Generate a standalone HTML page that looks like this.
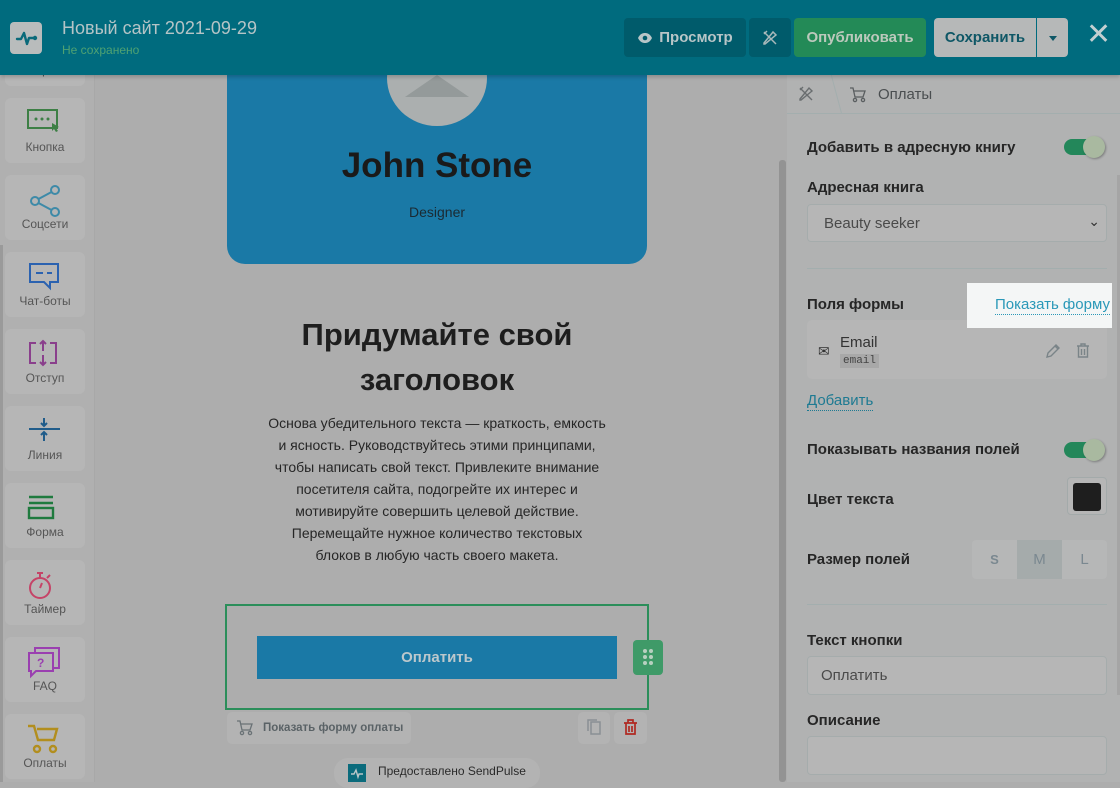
<!DOCTYPE html>
<html><head><meta charset="utf-8">
<style>
*{box-sizing:border-box;margin:0;padding:0}
body{width:1120px;height:782px;overflow:hidden;position:relative;background:#adadad;font-family:"Liberation Sans","DejaVu Sans",sans-serif;color:#222}
.abs{position:absolute}
#hdr{left:0;top:0;width:1120px;height:75px;background:#006b7e;box-shadow:0 2px 4px rgba(0,0,0,.2);z-index:5}
.btn{position:absolute;top:18px;height:39px;border-radius:4px;font-weight:bold;font-size:15px;display:flex;align-items:center;justify-content:center}
#side{left:0;top:75px;width:95px;height:707px;background:#b0b0b0;border-right:1px solid #a8a8a8}
.tile{position:absolute;left:5px;width:80px;height:65px;background:#b6b6b6;border-radius:6px;text-align:center;font-size:12px;color:#555}
.tile svg{position:absolute;left:22px;top:10px}
.tile span{position:absolute;left:0;right:0;top:42px}
#panel{left:787px;top:75px;width:333px;height:707px;background:#b1b2b2}
.lbl{position:absolute;left:20px;font-weight:bold;font-size:15px;color:#262626}
.inp{position:absolute;left:20px;width:300px;background:#b6b6b6;border:1px solid #a5acac;border-radius:4px;font-size:15px;color:#4a4a4a}
.tog{position:absolute;left:277px;width:38px;height:16px;background:#23875a;border-radius:8px}
.tog i{position:absolute;right:-3px;top:-3px;width:22px;height:22px;border-radius:50%;background:#a9b9a0;box-shadow:1px 1px 2px rgba(0,0,0,.3)}
.hr{position:absolute;left:20px;width:300px;height:1px;background:#a3aeae}
</style></head><body>

<div id="hdr" class="abs">
  <div class="abs" style="left:10px;top:22px;width:32px;height:32px;background:#b9bcbc;border-radius:4px">
    <svg width="32" height="32" viewBox="0 0 32 32"><path d="M7 17h4l3-6 3 11 2-6h5" fill="none" stroke="#0a6a7a" stroke-width="2.4" stroke-linejoin="round" stroke-linecap="round"/><circle cx="25" cy="16" r="2.2" fill="#0a6a7a"/></svg>
  </div>
  <div class="abs" style="left:62px;top:18px;font-size:18px;color:#b5c4c6">Новый сайт 2021-09-29</div>
  <div class="abs" style="left:62px;top:43px;font-size:12px;color:#4fa272">Не сохранено</div>
  <div class="btn" style="left:624px;width:122px;background:#005b6b;color:#b8c5c7"><svg width="16" height="12" viewBox="0 0 16 12" style="margin-right:6px"><path d="M1 6C3 2 5.5 1 8 1s5 1 7 5c-2 4-4.5 5-7 5S3 10 1 6z" fill="#b8c5c7"/><circle cx="8" cy="6" r="2.3" fill="#005b6b"/></svg>Просмотр</div>
  <div class="btn" style="left:749px;width:42px;background:#005b6b"><svg width="18" height="18" viewBox="0 0 18 18" fill="none" stroke="#a8b8ba" stroke-width="1.5"><path d="M3 14L12 3l3 3-11 9H3z"/><path d="M3 3l12 12M6 2l-3 3"/></svg></div>
  <div class="btn" style="left:794px;width:132px;background:#238a57;color:#bcc9bc">Опубликовать</div>
  <div class="btn" style="left:934px;width:102px;background:#b6b8b8;color:#0f5766;border-radius:4px 0 0 4px">Сохранить</div>
  <div class="btn" style="left:1037px;width:31px;background:#b6b8b8;border-radius:0 4px 4px 0"><div style="border:4px solid transparent;border-top:5px solid #0f5766;margin-top:5px"></div></div>
  <div class="abs" style="left:1086px;top:20px;font-size:30px;font-weight:bold;color:#c3cfd1;line-height:30px">✕</div>
</div>

<div id="side" class="abs">
  <div class="abs" style="left:0;top:170px;width:3px;height:537px;background:#9a9a9a"></div>
  <div class="tile" style="top:-54px"><span>Форма</span></div>
  <div class="tile" style="top:23px"><svg width="36" height="28" viewBox="0 0 36 28"><rect x="1" y="2" width="29" height="18" fill="none" stroke="#3d7f45" stroke-width="2"/><circle cx="9" cy="11" r="1.5" fill="#3d7f45"/><circle cx="15" cy="11" r="1.5" fill="#3d7f45"/><circle cx="21" cy="11" r="1.5" fill="#3d7f45"/><path d="M25 15l7 4-3 1 2 3-2 1-2-3-2 2z" fill="#3d7f45"/></svg><span>Кнопка</span></div>
  <div class="tile" style="top:100px"><svg width="36" height="32" viewBox="0 0 36 32" fill="none" stroke="#3d8aa8" stroke-width="2"><circle cx="8" cy="16" r="4"/><circle cx="28" cy="5" r="4"/><circle cx="28" cy="27" r="4"/><path d="M11.5 14l13-7M11.5 18l13 7"/></svg><span>Соцсети</span></div>
  <div class="tile" style="top:177px"><svg width="36" height="30" viewBox="0 0 36 30" fill="none" stroke="#2b62b0" stroke-width="2"><path d="M3 2h28v18h-8v6l-6-6H3z"/><path d="M9 11h7M20 11h5"/></svg><span>Чат-боты</span></div>
  <div class="tile" style="top:254px"><svg width="36" height="30" viewBox="0 0 36 30" fill="none" stroke="#8a3f8c" stroke-width="2"><path d="M9 4H3v20h6M23 4h6v20h-6M16 2v10M16 16v10"/><path d="M13 5l3-3 3 3M13 23l3 3 3-3"/></svg><span>Отступ</span></div>
  <div class="tile" style="top:331px"><svg width="36" height="30" viewBox="0 0 36 30" fill="none" stroke="#205c8a" stroke-width="2"><path d="M2 13h31M17 2v7M17 17v8"/><path d="M14 7l3 3 3-3M14 19l3-3 3 3"/></svg><span>Линия</span></div>
  <div class="tile" style="top:408px"><svg width="36" height="30" viewBox="0 0 36 30" fill="none" stroke="#1f7a3e" stroke-width="2.4"><path d="M2 4h24M2 10h24"/><rect x="2" y="15" width="24" height="10"/></svg><span>Форма</span></div>
  <div class="tile" style="top:485px"><svg width="36" height="32" viewBox="0 0 36 32" fill="none" stroke="#c54367" stroke-width="2"><circle cx="13" cy="18" r="10"/><path d="M10 3h6M13 3v5M20 8l3-3M13 18l2-5"/></svg><span>Таймер</span></div>
  <div class="tile" style="top:562px"><svg width="36" height="32" viewBox="0 0 36 32" fill="none" stroke="#9a3fb0" stroke-width="2"><rect x="8" y="1" width="24" height="20"/><path d="M2 6h24v18H9l-5 5v-5H2z" fill="#b6b6b6"/><text x="10" y="20" font-size="12" font-weight="bold" fill="#9a3fb0" stroke="none" font-family="Liberation Sans">?</text></svg><span>FAQ</span></div>
  <div class="tile" style="top:639px"><svg width="36" height="32" viewBox="0 0 36 32" fill="none" stroke="#b28e1e" stroke-width="2.4"><path d="M1 2h6l4 14h16l3-11H10"/><circle cx="10" cy="25" r="3"/><circle cx="26" cy="25" r="3"/></svg><span>Оплаты</span></div>
</div>

<!-- canvas -->
<div class="abs" style="left:227px;top:60px;width:420px;height:204px;background:#1a79a6;border-radius:0 0 18px 18px"></div>
<div class="abs" style="left:387px;top:30px;width:100px;height:96px;border-radius:50%;background:#abafaf;overflow:hidden"><div style="position:absolute;left:18px;top:45px;width:0;height:0;border-left:32px solid transparent;border-right:32px solid transparent;border-bottom:22px solid #949a9a"></div></div>
<div class="abs" style="left:227px;top:146px;width:420px;text-align:center;font-size:35px;font-weight:bold;color:#1a1a1a">John Stone</div>
<div class="abs" style="left:227px;top:204px;width:420px;text-align:center;font-size:14px;color:#1a2a33">Designer</div>
<div class="abs" style="left:227px;top:312px;width:420px;text-align:center;font-size:31px;line-height:45px;font-weight:bold;color:#1e1e1e">Придумайте свой<br>заголовок</div>
<div class="abs" style="left:252px;top:412px;width:370px;text-align:center;font-size:14px;line-height:22px;color:#262626">Основа убедительного текста — краткость, емкость<br>и ясность. Руководствуйтесь этими принципами,<br>чтобы написать свой текст. Привлеките внимание<br>посетителя сайта, подогрейте их интерес и<br>мотивируйте совершить целевой действие.<br>Перемещайте нужное количество текстовых<br>блоков в любую часть своего макета.</div>
<div class="abs" style="left:225px;top:604px;width:424px;height:106px;border:2px solid #2b8e5a"></div>
<div class="abs" style="left:257px;top:636px;width:360px;height:43px;background:#1a79a6;color:#bcc8cc;font-weight:bold;font-size:15px;display:flex;align-items:center;justify-content:center">Оплатить</div>
<div class="abs" style="left:633px;top:640px;width:30px;height:35px;background:#3f9a68;border-radius:4px"><svg width="30" height="35"><g fill="#b8d0c0"><circle cx="12" cy="11" r="2"/><circle cx="18" cy="11" r="2"/><circle cx="12" cy="17" r="2"/><circle cx="18" cy="17" r="2"/><circle cx="12" cy="23" r="2"/><circle cx="18" cy="23" r="2"/></g></svg></div>
<div class="abs" style="left:227px;top:712px;width:184px;height:32px;background:#b3b3b3;border-radius:5px;font-size:11.5px;font-weight:bold;color:#5a6266;display:flex;align-items:center;padding-left:36px;white-space:nowrap">Показать форму оплаты</div>
<svg class="abs" style="left:236px;top:720px" width="18" height="16" viewBox="0 0 18 16" fill="none" stroke="#6a7276" stroke-width="1.3"><path d="M1 1h3l2 9h8l2-6H5"/><circle cx="6" cy="13" r="1.6"/><circle cx="14" cy="13" r="1.6"/></svg>
<div class="abs" style="left:578px;top:712px;width:32px;height:32px;background:#b3b3b3;border-radius:5px"><svg width="32" height="32" fill="none" stroke="#8a9094" stroke-width="1.5"><rect x="13" y="10" width="9" height="12"/><path d="M10 19V8h9"/></svg></div>
<div class="abs" style="left:614px;top:712px;width:33px;height:32px;background:#b3b3b3;border-radius:5px"><svg width="33" height="32" fill="none" stroke="#b02a22" stroke-width="1.7"><path d="M10 11h13M14 11V8h5v3M12 11v11h9V11M15 14v6M18 14v6"/></svg></div>
<div class="abs" style="left:334px;top:758px;width:206px;height:30px;background:#b3b3b3;border-radius:14px;font-size:12px;color:#2a2a2a;padding:6px 0 0 44px">Предоставлено SendPulse</div>
<div class="abs" style="left:348px;top:764px;width:18px;height:18px;background:#0b6b7c"><svg width="18" height="18"><path d="M3 10h3l2-4 2 7 1-3h4" fill="none" stroke="#b9c6c8" stroke-width="1.4"/></svg></div>
<div class="abs" style="left:779px;top:160px;width:7px;height:622px;background:#939393;border-radius:3px"></div>

<div id="panel" class="abs">
  <div class="abs" style="left:0;top:0;width:333px;height:39px;border-bottom:1px solid #a3aeae"></div>
  <div class="abs" style="left:40px;top:0;width:10px;height:39px;border-right:1px solid #a3aeae;transform:skewX(15deg)"></div>
  <svg class="abs" style="left:10px;top:10px" width="18" height="18" viewBox="0 0 18 18" fill="none" stroke="#6a6e70" stroke-width="1.4"><path d="M3 14L12 3l3 3-11 9H3z"/><path d="M3 3l12 12M6 2l-3 3"/></svg>
  <svg class="abs" style="left:62px;top:12px" width="18" height="16" viewBox="0 0 18 16" fill="none" stroke="#5a5e60" stroke-width="1.3"><path d="M1 1h3l2 9h8l2-6H5"/><circle cx="6" cy="13" r="1.6"/><circle cx="14" cy="13" r="1.6"/></svg>
  <div class="abs" style="left:91px;top:11px;font-size:15px;color:#4a4e50">Оплаты</div>

  <div class="lbl" style="top:64px">Добавить в адресную книгу</div>
  <div class="tog" style="top:64px"><i></i></div>
  <div class="lbl" style="top:104px">Адресная книга</div>
  <div class="inp" style="top:129px;height:38px;padding:10px 0 0 16px">Beauty seeker<span style="position:absolute;right:6px;top:8px;font-size:14px;color:#333">⌄</span></div>
  <div class="hr" style="top:193px"></div>
  <div class="lbl" style="top:221px">Поля формы</div>
  <div class="abs" style="left:20px;top:245px;width:300px;height:59px;background:#b6b6b6;border-radius:5px"></div>
  <div class="abs" style="left:180px;top:208px;width:145px;height:45px;background:#f4f6f6"></div>
  <div class="abs" style="left:208px;top:221px;font-size:15px;color:#2a98b8;border-bottom:1px dotted #2a98b8;line-height:18px">Показать форму</div>
  <div class="abs" style="left:31px;top:268px;font-size:14px;color:#333">✉</div>
  <div class="abs" style="left:53px;top:259px;font-size:15px;color:#333">Email</div>
  <div class="abs" style="left:53px;top:279px;font-size:11px;font-family:'Liberation Mono',monospace;color:#444;background:#a8a8a8;padding:1px 3px">email</div>
  <svg class="abs" style="left:258px;top:268px" width="16" height="16" fill="none" stroke="#7a8488" stroke-width="1.4"><path d="M2 14l1-4 8-8 3 3-8 8zM10 3l3 3"/></svg>
  <svg class="abs" style="left:288px;top:267px" width="16" height="17" fill="none" stroke="#7a8488" stroke-width="1.4"><path d="M2 4h12M6 4V2h4v2M3.5 4v11h9V4M6.5 7v6M9.5 7v6"/></svg>
  <div class="abs" style="left:20px;top:317px;font-size:15px;color:#1e7a92;border-bottom:1px dotted #1e7a92;line-height:18px">Добавить</div>
  <div class="lbl" style="top:366px">Показывать названия полей</div>
  <div class="tog" style="top:367px"><i></i></div>
  <div class="lbl" style="top:416px">Цвет текста</div>
  <div class="abs" style="left:280px;top:402px;width:40px;height:38px;border:1px solid #a3aaaa;border-radius:4px;background:#b6b6b6"><div style="margin:5px;width:28px;height:28px;background:#1e1e1e;border-radius:3px"></div></div>
  <div class="lbl" style="top:476px">Размер полей</div>
  <div class="abs" style="left:185px;top:465px;width:135px;height:39px;background:#b6b7b7;border-radius:4px;display:flex;font-size:15px;color:#7a8890;font-weight:bold">
    <div style="flex:1;text-align:center;line-height:39px;font-size:13px">S</div>
    <div style="flex:1;text-align:center;line-height:39px;background:#a5abab;font-weight:normal">M</div>
    <div style="flex:1;text-align:center;line-height:39px;font-weight:normal">L</div>
  </div>
  <div class="hr" style="top:529px"></div>
  <div class="lbl" style="top:557px">Текст кнопки</div>
  <div class="inp" style="top:581px;height:39px;padding:10px 0 0 13px">Оплатить</div>
  <div class="lbl" style="top:637px">Описание</div>
  <div class="inp" style="top:661px;height:39px"></div>
  <div class="abs" style="left:330px;top:100px;width:3px;height:520px;background:#a5a5a5"></div>
</div>
</body></html>
